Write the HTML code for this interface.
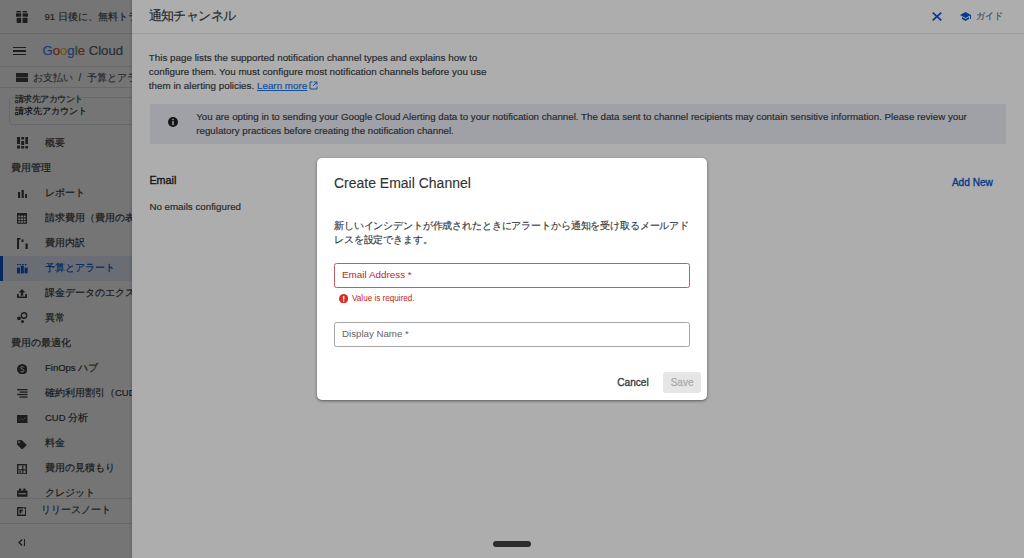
<!DOCTYPE html>
<html><head><meta charset="utf-8">
<style>
*{margin:0;padding:0;box-sizing:border-box}
svg{display:block}
html,body{width:1024px;height:558px;overflow:hidden;background:#fff;font-family:"Liberation Sans",sans-serif;color:#3c4043}
.a{position:absolute;white-space:nowrap;-webkit-text-stroke:0.18px currentColor}
.nb{-webkit-text-stroke:0}
#app{position:absolute;left:0;top:0;width:1024px;height:558px;background:#fff}
.hl{position:absolute;height:1px;background:#e3e3e3}
.mi{position:absolute;left:0;width:132px;height:25px}
.mi .ic{position:absolute;left:16px;top:7px;width:12px;height:11px}
.mi .t{position:absolute;left:45px;top:0;line-height:25px;font-size:9.5px;color:#3c4043;white-space:nowrap;-webkit-text-stroke:0.2px currentColor}
.mt{position:absolute;left:45px;font-size:9.5px;line-height:14px;margin-top:-7px;white-space:nowrap;-webkit-text-stroke:0.2px currentColor}
.sh{position:absolute;left:10.5px;font-size:9.5px;color:#3c4043;white-space:nowrap;line-height:14px;-webkit-text-stroke:0.2px currentColor}
#ov1{position:absolute;left:0;top:0;width:1024px;height:558px;background:rgba(0,0,0,.32)}
#drawer{position:absolute;left:132px;top:0;width:892px;height:558px;background:#fff;box-shadow:-1px 0 2px rgba(0,0,0,.15)}
#ov2{position:absolute;left:0;top:0;width:1024px;height:558px;background:rgba(0,0,0,.32)}
#modal{position:absolute;left:317px;top:158px;width:390px;height:242px;background:#fff;border-radius:5px;box-shadow:0 1px 2px rgba(0,0,0,.3),0 1px 3px 1px rgba(0,0,0,.15)}
</style></head><body>
<div id="app">
  <!-- top bar -->
  <div class="a" style="left:16.3px;top:10.7px;width:12.2px;height:12.2px"><svg width="12.2" height="12.2" viewBox="0 0 12.2 12.2"><g fill="#3c4043"><rect x="0.4" y="0" width="4.6" height="1.4"/><rect x="6.6" y="0" width="4.4" height="1.4"/><rect x="0" y="2.3" width="5.2" height="3.4"/><rect x="6.6" y="2.3" width="5.6" height="3.4"/><rect x="0.7" y="6.8" width="4.5" height="5.3"/><rect x="6.6" y="6.8" width="4.9" height="5.3"/></g></svg></div>
  <div class="a" style="left:44.5px;top:10px;font-size:9.6px;line-height:14px;color:#4a4e52">91 日後に、無料トライアルが終了します</div>
  <div class="hl" style="left:0;top:33px;width:1024px"></div>
  <!-- hamburger -->
  <div class="a" style="left:13px;top:46.5px;width:13px;height:1.6px;background:#3c4043"></div>
  <div class="a" style="left:13px;top:50.2px;width:13px;height:1.6px;background:#3c4043"></div>
  <div class="a" style="left:13px;top:53.9px;width:13px;height:1.6px;background:#3c4043"></div>
  <div class="a" style="left:42.4px;top:41.6px;font-size:13.2px;line-height:18px;letter-spacing:0"><span style="color:#4285f4">G</span><span style="color:#ea4335">o</span><span style="color:#fbbc04">o</span><span style="color:#4285f4">g</span><span style="color:#34a853">l</span><span style="color:#ea4335">e</span> <span style="color:#5f6368">Cloud</span></div>
  <div class="hl" style="left:0;top:66px;width:1024px"></div>
  <!-- breadcrumb -->
  <div class="a" style="left:16.2px;top:73.2px;width:11.8px;height:8.8px;background:#45484c;border-radius:0.5px"><div style="position:absolute;left:0;top:4px;width:11.8px;height:1.2px;background:#a8abb0"></div></div>
  <div class="a" style="left:33px;top:71px;font-size:10px;line-height:14px;color:#5f6368">お支払い&nbsp; /&nbsp; 予算とアラート</div>
  <div class="hl" style="left:0;top:87px;width:1024px"></div>
  <!-- dropdown -->
  <div class="a" style="left:8.5px;top:96.5px;width:140px;height:28px;border:1px solid #e3e5e8;border-radius:3px"></div>
  <div class="a" style="left:14.5px;top:93px;font-size:9px;letter-spacing:-0.5px;line-height:12px;color:#3c4043">請求先アカウント</div>
  <div class="a" style="left:14.5px;top:104px;font-size:9px;line-height:14px;color:#202124">請求先アカウント</div>
  <!-- menu -->
  <div class="a" style="left:0;top:256px;width:132px;height:25px;background:#e8f0fe"></div>
  <div class="a" style="left:0;top:256px;width:3px;height:25px;background:#0b57d0"></div>
  <div class="a" style="left:16.5px;top:137px;width:11.5px;height:11.5px"><svg width="11.5" height="11.5" viewBox="0 0 11.5 11.5"><g fill="#3c4043"><rect x="0" y="0" width="3" height="7"/><rect x="0" y="8.5" width="3" height="3"/><rect x="4.2" y="0" width="3" height="2.5"/><rect x="4.2" y="4" width="3" height="4"/><rect x="4.2" y="9" width="3" height="2.5"/><rect x="8.4" y="0" width="3" height="7"/><rect x="8.4" y="9" width="3" height="2.5"/></g></svg></div>
  <div class="mt" style="top:143px;color:#3c4043">概要</div>
  <div class="sh" style="top:161px">費用管理</div>
  <div class="a" style="left:17.8px;top:190px;width:9.5px;height:8px"><svg width="9.5" height="8" viewBox="0 0 9.5 8"><g fill="#3c4043"><rect x="0" y="2" width="2.2" height="6"/><rect x="3.6" y="0" width="2.2" height="8"/><rect x="7.1" y="4" width="2.2" height="4"/></g></svg></div>
  <div class="mt" style="top:193px;color:#3c4043">レポート</div>
  <div class="a" style="left:17px;top:213px;width:10px;height:10.8px"><svg width="10" height="10.8" viewBox="0 0 10 10.8"><g fill="#3c4043"><rect x="0" y="0" width="10" height="10.8"/></g><g fill="#fff"><rect x="1.3" y="2.6" width="2" height="1.8"/><rect x="4" y="2.6" width="2" height="1.8"/><rect x="6.7" y="2.6" width="2" height="1.8"/><rect x="1.3" y="5.4" width="2" height="1.8"/><rect x="4" y="5.4" width="2" height="1.8"/><rect x="6.7" y="5.4" width="2" height="1.8"/><rect x="1.3" y="8.1" width="2" height="1.6"/><rect x="4" y="8.1" width="2" height="1.6"/><rect x="6.7" y="8.1" width="2" height="1.6"/></g></svg></div>
  <div class="mt" style="top:218px;color:#3c4043">請求費用（費用の表）</div>
  <div class="a" style="left:17px;top:237.6px;width:11px;height:11.3px"><svg width="11" height="11.3" viewBox="0 0 11 11.3"><g fill="#3c4043"><rect x="0" y="0" width="2" height="11.3"/><rect x="0" y="0" width="3.5" height="1.6"/><rect x="4.5" y="1.5" width="2" height="2.5"/><rect x="8.5" y="5.5" width="2.2" height="5.8"/></g></svg></div>
  <div class="mt" style="top:243px;color:#3c4043">費用内訳</div>
  <div class="a" style="left:17px;top:264.3px;width:10.6px;height:9.4px"><svg width="10.6" height="9.4" viewBox="0 0 10.6 9.4"><g fill="#0b57d0"><rect x="0" y="0" width="1.6" height="1.3"/><rect x="2.6" y="0" width="1.6" height="1.3"/><rect x="5.2" y="0" width="1.6" height="1.3"/><rect x="7.8" y="0" width="1.6" height="1.3"/><rect x="0" y="3.6" width="3" height="5.8"/><rect x="3.8" y="1.8" width="3" height="7.6"/><rect x="7.6" y="3.6" width="3" height="5.8"/></g></svg></div>
  <div class="mt" style="top:268px;color:#0b57d0">予算とアラート</div>
  <div class="a" style="left:17px;top:288.7px;width:10px;height:9.3px"><svg width="10" height="9.3" viewBox="0 0 10 9.3"><g fill="#3c4043"><path d="M5 0 L1.5 3.6 H3.8 V6.8 H6.2 V3.6 H8.5Z"/><path d="M0 5 H1.8 V7.5 H8.2 V5 H10 V9.3 H0Z"/></g></svg></div>
  <div class="mt" style="top:293px;color:#3c4043">課金データのエクスポート</div>
  <div class="a" style="left:17px;top:312px;width:10.5px;height:11px"><svg width="10.5" height="11" viewBox="0 0 10.5 11"><circle cx="7" cy="3.5" r="2.7" fill="none" stroke="#3c4043" stroke-width="1.4"/><circle cx="2" cy="6.3" r="1.9" fill="#3c4043"/><circle cx="5.5" cy="9.4" r="1.5" fill="#3c4043"/></svg></div>
  <div class="mt" style="top:318px;color:#3c4043">異常</div>
  <div class="sh" style="top:336px">費用の最適化</div>
  <div class="a" style="left:16.9px;top:363.6px;width:10.5px;height:10.5px"><svg width="10.5" height="10.5" viewBox="0 0 10.5 10.5"><circle cx="5.25" cy="5.25" r="5.25" fill="#3c4043"/><path d="M6.9 3.6 Q6.4 2.6 5.2 2.6 Q3.6 2.6 3.6 3.8 Q3.6 4.8 5.2 5.1 Q6.9 5.5 6.9 6.6 Q6.9 7.9 5.2 7.9 Q3.9 7.9 3.5 6.9" fill="none" stroke="#fff" stroke-width="1"/></svg></div>
  <div class="mt" style="top:368px;color:#3c4043">FinOps ハブ</div>
  <div class="a" style="left:17px;top:389.4px;width:10.5px;height:8.7px"><svg width="10.5" height="8.7" viewBox="0 0 10.5 8.7"><g fill="#3c4043"><rect x="0" y="0" width="10.5" height="1.3"/><rect x="2.5" y="2.45" width="8" height="1.3"/><rect x="0" y="4.9" width="10.5" height="1.3"/><rect x="2.5" y="7.4" width="8" height="1.3"/></g></svg></div>
  <div class="mt" style="top:393px;color:#3c4043">確約利用割引（CUD）</div>
  <div class="a" style="left:17px;top:415px;width:10.5px;height:8.2px"><svg width="10.5" height="8.2" viewBox="0 0 10.5 8.2"><rect x="0" y="0" width="10.5" height="8.2" fill="#3c4043"/><path d="M1.5 6 L4 3.5 L6 5 L9 2" fill="none" stroke="#8a8c90" stroke-width="0.9"/></svg></div>
  <div class="mt" style="top:418px;color:#3c4043">CUD 分析</div>
  <div class="a" style="left:17.3px;top:439.8px;width:9.8px;height:9.6px"><svg width="9.8" height="9.6" viewBox="0 0 9.8 9.6"><path d="M0 0.5 L4.6 0 L9.8 5 L5.2 9.6 L0 4.6Z" fill="#3c4043"/><circle cx="2" cy="2.2" r="0.9" fill="#fff"/></svg></div>
  <div class="mt" style="top:443px;color:#3c4043">料金</div>
  <div class="a" style="left:17px;top:463.7px;width:10px;height:10.7px"><svg width="10" height="10.7" viewBox="0 0 10 10.7"><rect x="0.7" y="0.7" width="8.6" height="9.3" fill="none" stroke="#3c4043" stroke-width="1.4"/><g fill="#3c4043"><rect x="5.2" y="1.5" width="1.2" height="8"/><rect x="1.5" y="5.2" width="7" height="1.2"/><rect x="2.5" y="7.2" width="1.5" height="1.5"/></g></svg></div>
  <div class="mt" style="top:468px;color:#3c4043">費用の見積もり</div>
  <div class="a" style="left:17px;top:488.2px;width:10.5px;height:8.8px"><svg width="10.5" height="8.8" viewBox="0 0 10.5 8.8"><g fill="#3c4043"><path d="M2 2.5 V0.6 H4.2 V2.5 H6.3 V0.6 H8.5 V2.5 H10.5 V8.8 H0 V2.5Z"/></g><rect x="1.3" y="5.2" width="7.9" height="1.1" fill="#fff"/></svg></div>
  <div class="mt" style="top:493px;color:#3c4043">クレジット</div>
  <!-- footer -->
  <div class="a" style="left:0;top:498px;width:132px;height:60px;background:#fff"></div>
  <div class="hl" style="left:0;top:498px;width:132px"></div>
  <div class="a" style="left:16.9px;top:507.4px;width:9.4px;height:9px"><svg width="9.4" height="9" viewBox="0 0 9.4 9"><path d="M6.5 0.7 H0.7 V8.3 H8.7 V2.5" fill="none" stroke="#3c4043" stroke-width="1.4"/><rect x="7.4" y="0" width="2" height="2" fill="#3c4043"/><g fill="#3c4043"><rect x="2.6" y="2.6" width="1.3" height="4"/><rect x="2.6" y="2.6" width="3.5" height="1.2"/><rect x="2.6" y="4.4" width="3" height="1.1"/></g></svg></div>
  <div class="a" style="left:40.8px;top:503px;font-size:9.5px;line-height:14px;color:#3c4043">リリースノート</div>
  <div class="hl" style="left:0;top:523.2px;width:132px"></div>
  <div class="a" style="left:17.9px;top:538.5px;width:7.5px;height:7px"><svg width="7.5" height="7" viewBox="0 0 7.5 7"><path d="M4.2 0.6 L1 3.5 L4.2 6.4" fill="none" stroke="#3c4043" stroke-width="1.3"/><rect x="5.9" y="0" width="1.4" height="7" fill="#3c4043"/></svg></div>
</div>
<div id="ov1"></div>
<div id="drawer">
  <div class="a" style="left:16.5px;top:7px;font-size:13px;letter-spacing:-0.6px;line-height:18px;color:#3c4043">通知チャンネル</div>
  <div class="hl" style="left:0;top:33px;width:892px"></div>
  <div class="a" style="left:800.3px;top:12px;width:10px;height:9px"><svg width="10" height="9" viewBox="0 0 10 9"><path d="M0.7 0.6 L9.3 8.4 M9.3 0.6 L0.7 8.4" stroke="#0b57d0" stroke-width="1.7"/></svg></div>
  <div class="a" style="left:828.4px;top:12.2px;width:11px;height:9px"><svg width="11" height="9" viewBox="1 3 22 18"><path d="M5 13.18v4L12 21l7-3.82v-4L12 17l-7-3.82zM12 3L1 9l11 6 9-4.91V17h2V9L12 3z" fill="#0b57d0"/></svg></div>
  <div class="a" style="left:843.6px;top:9px;font-size:9.4px;line-height:14px;color:#5f6f8f">ガイド</div>
  <div class="a" style="left:16.8px;top:50.6px;font-size:9.83px;line-height:13.95px;color:#3c4043">This page lists the supported notification channel types and explains how to<br>configure them. You must configure most notification channels before you use<br>them in alerting policies. <span style="color:#1a73e8;text-decoration:underline">Learn more</span><svg width="9" height="9" viewBox="0 0 9 9" style="display:inline;margin-left:2px;vertical-align:-1px"><path d="M3.5 1 H1 V8 H8 V5.5" fill="none" stroke="#1a73e8" stroke-width="1"/><path d="M5 1 H8 V4 M8 1 L4 5" fill="none" stroke="#1a73e8" stroke-width="1"/></svg></div>
  <div class="a" style="left:17.8px;top:103.8px;width:856.7px;height:39.8px;background:#eceef5"></div>
  <div class="a" style="left:35.8px;top:116.8px;width:10px;height:10px"><svg width="10" height="10" viewBox="0 0 10 10"><circle cx="5" cy="5" r="5" fill="#202124"/><rect x="4.3" y="4.2" width="1.4" height="3.8" fill="#fff"/><circle cx="5" cy="2.6" r="0.8" fill="#fff"/></svg></div>
  <div class="a" style="left:64.25px;top:110.2px;font-size:9.74px;line-height:13.7px;color:#3c4043">You are opting in to sending your Google Cloud Alerting data to your notification channel. The data sent to channel recipients may contain sensitive information. Please review your<br>regulatory practices before creating the notification channel.</div>
  <div class="a" style="left:17.4px;top:173px;font-size:10.8px;line-height:14px;color:#202124;-webkit-text-stroke:0.35px currentColor">Email</div>
  <div class="a" style="left:17.4px;top:199.6px;font-size:9.75px;line-height:14px;color:#3c4043">No emails configured</div>
  <div class="a" style="left:819.9px;top:175.6px;font-size:10.1px;line-height:14px;color:#0b57d0;-webkit-text-stroke:0.35px currentColor">Add New</div>
</div>
<div id="ov2"></div>
<div id="modal">
  <div class="a" style="left:16.9px;top:15.15px;font-size:14px;line-height:20px;color:#303134;-webkit-text-stroke:0.1px currentColor">Create Email Channel</div>
  <div class="a" style="left:17px;top:61px;font-size:10px;letter-spacing:-0.14px;line-height:13.5px;color:#3c4043">新しいインシデントが作成されたときにアラートから通知を受け取るメールアド<br>レスを設定できます。</div>
  <div class="a" style="left:17px;top:105px;width:356px;height:25px;border:1px solid #bf5f5c;border-radius:2.5px"></div>
  <div class="a nb" style="left:25px;top:110.4px;font-size:9.9px;line-height:14px;color:#c5221f">Email Address *</div>
  <div class="a" style="left:22.15px;top:135.85px;width:9.3px;height:9.3px"><svg width="9.3" height="9.3" viewBox="0 0 10 10"><circle cx="5" cy="5" r="5" fill="#d93025"/><rect x="4.25" y="2.2" width="1.5" height="3.9" fill="#fff"/><circle cx="5" cy="7.5" r="0.85" fill="#fff"/></svg></div>
  <div class="a nb" style="left:35px;top:134.9px;font-size:8.13px;line-height:12px;color:#c5221f">Value is required.</div>
  <div class="a" style="left:17px;top:164.3px;width:356px;height:24.5px;border:1px solid #a4a6a9;border-radius:2.5px"></div>
  <div class="a nb" style="left:25px;top:169.2px;font-size:9.7px;line-height:14px;color:#5f6368">Display Name *</div>
  <div class="a" style="left:300.3px;top:217.6px;font-size:10.1px;line-height:14px;color:#3c4043;-webkit-text-stroke:0.35px currentColor">Cancel</div>
  <div class="a nb" style="left:346.2px;top:214px;width:37.8px;height:20.6px;background:#e6e6e6;border-radius:3px;font-size:9.6px;line-height:22px;text-align:center;color:#adadad;font-size:10px;-webkit-text-stroke:0.3px currentColor">Save</div>
</div>
<div class="a" style="left:493px;top:540.5px;width:38px;height:6px;border-radius:3px;background:#2b2b2b"></div>
</body></html>
